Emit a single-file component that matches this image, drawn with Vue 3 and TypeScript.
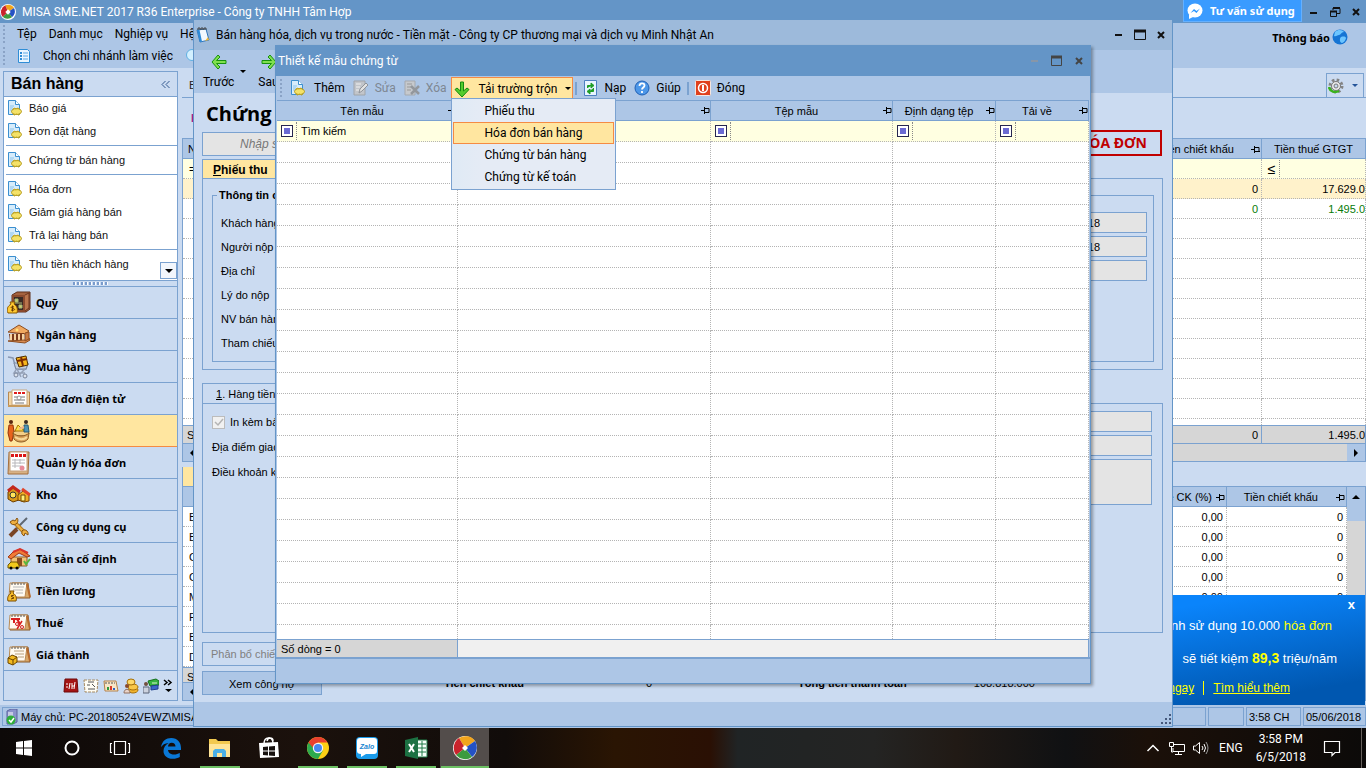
<script setup lang="ts">
import { ref } from 'vue'

interface NavItem { label: string; icon: string }
interface ListItem { label: string; sep?: boolean }

const docIcon = '<path d="M1.500.5h7l4 4v10h-11z" fill="#d6ecfb" stroke="#3b8fd0"/><path d="M8.500.5v4h4" fill="#fff" stroke="#3b8fd0"/><path d="M3 6h4M3 8h3M3 10h3" stroke="#8cc4ec"/><ellipse cx="9.500" cy="11.500" rx="5" ry="3" fill="#f4e268" stroke="#b59a1c"/><path d="M6 9.500l1-1.500 2 1 2-1 1.500 1.200M6 14l1.500 1 2-1 2 1 1.500-1" fill="none" stroke="#c2a51f"/>'

const shortcuts: ListItem[] = [
  { label: 'Báo giá' },
  { label: 'Đơn đặt hàng' },
  { label: 'Chứng từ bán hàng', sep: true },
  { label: 'Hóa đơn', sep: true },
  { label: 'Giảm giá hàng bán' },
  { label: 'Trả lại hàng bán' },
  { label: 'Thu tiền khách hàng', sep: true },
]

const calendar = '<path d="M5 4h16l2 15H3z" fill="#d9a868" stroke="#8a5a2b"/><path d="M3 4h17l-2 14H2z" fill="#fffaf0" stroke="#b88a55"/><path d="M4 5h15" stroke="#555" stroke-dasharray="2 1"/><path d="M20 5l3 13" stroke="#b86a2c" stroke-width="2"/>'

const modules: NavItem[] = [
  { label: 'Quỹ', icon: '<path d="M5 4l5-3h13v17l-4 3H5z" fill="#a4623f" stroke="#5f2f1b"/><path d="M5 4h13v17H5z" fill="#8b4a2e"/><path d="M7 6h9v13H7z" fill="#3a2a24"/><path d="M8 12h7M8 8h3v3H8zM12 14h3v3h-3z" stroke="#a7b77a" fill="#c9d06c"/><path d="M18 4l4-2v15l-4 3" fill="#b9744c" stroke="#6b3520"/><path d="M3 11h5l-1 2c3 2 4 5 3 9H1c-2-4 0-7 3-9z" fill="#ffc931" stroke="#8a5a00"/><path d="M7 16c-3-1-4 1-1 1.500s1.500 2.500-2 1.500M5.500 14.500v6" fill="none" stroke="#6b3d00"/>' },
  { label: 'Ngân hàng', icon: '<path d="M1 9L12 2l10 6-4 3z" fill="#f0a860" stroke="#8d4d20"/><path d="M2 11l15-1v9L3 18z" fill="#7a3b1a"/><path d="M4 11v7M8 11v7M12 11v7M16 11v8" stroke="#f6d3a0" stroke-width="2"/><path d="M1 18l17 2 5-3-1-2-4 2z" fill="#d98b50" stroke="#8d4d20"/><path d="M18 10l4-1v7l-4 2z" fill="#c87a44" stroke="#8d4d20"/><circle cx="10" cy="7" r="1.500" fill="#ffe27a"/>' },
  { label: 'Mua hàng', icon: '<path d="M1 2l5 1 3 11h10l2-6" fill="none" stroke="#8797b3" stroke-width="1.500"/><path d="M7 8h14l-2 6H9z" fill="#c3ccdb" stroke="#7d8aa3"/><path d="M9 3l10-2 2 9-9 2z" fill="#f7b61d" stroke="#503000"/><path d="M14 2l2 9M10 6l10-2" stroke="#7b2a00" stroke-width="2"/><path d="M9 15l-2 3h11M10 14l4 8M18 14l-5 5" fill="none" stroke="#95a1b7" stroke-width="1.500"/><circle cx="9" cy="20" r="2" fill="#dde3ed" stroke="#77839a"/><circle cx="18" cy="21" r="2" fill="#dde3ed" stroke="#77839a"/>' },
  { label: 'Hóa đơn điện tử', icon: '<path d="M1.500 5h21v14h-21z" fill="#f2d5a5" stroke="#b88950"/><path d="M5 3h15v15H5z" fill="#fff" stroke="#c9a77c"/><path d="M7 6h11" stroke="#df1c1c" stroke-width="2" stroke-dasharray="3 1"/><path d="M7 10h4M14 10h4M7 13h11M8 16h9" stroke="#777"/><circle cx="12" cy="11" r="2" fill="none" stroke="#999"/><path d="M1 19h22" stroke="#c79a5c" stroke-width="2"/>' },
  { label: 'Bán hàng', icon: '<circle cx="4" cy="3" r="2" fill="#5a260f"/><path d="M2 6h4l1 7-2 9H3L1 14z" fill="#e8641c" stroke="#94320a"/><ellipse cx="14" cy="14" rx="8" ry="3" fill="#f3cf88" stroke="#8f5d25"/><path d="M6 14c4 4 12 4 16 0l-1 6c-3 4-11 4-14 0z" fill="#d9a35a" stroke="#8f5d25"/><path d="M8 18c4 3 9 3 12 0" fill="none" stroke="#f7d99a" stroke-width="2"/><path d="M8 12l3-6 3 3 4 3z" fill="#ffe04c" stroke="#a87500"/><circle cx="19" cy="3" r="2" fill="#3b2a20"/><path d="M17 6h4l1 7h-5z" fill="#4d94b5" stroke="#285a75"/><path d="M17 8l-5 2" stroke="#f3b98a" stroke-width="2"/>' },
  { label: 'Quản lý hóa đơn', icon: '<path d="M2 1h20l-1 22H1z" fill="#d8b184" stroke="#a56f3c"/><path d="M3 1h17v19H3z" fill="#fff" stroke="#c4a07a"/><path d="M4 4.500h15" stroke="#dc1717" stroke-width="3" stroke-dasharray="3 1"/><path d="M5 9h13M5 12h13M5 15h9M8 8v9M13 8v5" stroke="#b7b7bb"/><circle cx="15" cy="17" r="2.500" fill="#e88a98"/>' },
  { label: 'Kho', icon: '<path d="M1 9l5-4 6 4v8l-6 2-5-3z" fill="#d89818" stroke="#6c3d00"/><path d="M1 8l5-4 7 5" fill="none" stroke="#c3281c" stroke-width="3"/><circle cx="6" cy="12" r="3" fill="#ffe45a" stroke="#333"/><path d="M11 12l5-4 6 4v6l-5 1-6-2z" fill="#f0ae26" stroke="#7c4700"/><path d="M15 6l8 6" stroke="#e0452c" stroke-width="3"/><path d="M14 12h4v6h-4z" fill="#fff07a" stroke="#704600"/>' },
  { label: 'Công cụ dụng cụ', icon: '<path d="M8 15L20 3" stroke="#5f6772" stroke-width="2"/><path d="M3 21l7-7" stroke="#7a4526" stroke-width="4"/><path d="M7 7l10 10" stroke="#b77a1c" stroke-width="4"/><path d="M7 7l10 10" stroke="#efb040" stroke-width="2"/><path d="M3 7a4 4 0 006 2 4 4 0 001-6L8 6 6 5zM16 15a4 4 0 015 5l-3-2-1 3a4 4 0 01-2-5z" fill="#efb040" stroke="#875310"/>' },
  { label: 'Tài sản cố định', icon: '<path d="M4 10h16v9H4z" fill="#f3c376" stroke="#8e5c24"/><path d="M1 10l5-5 7-3 10 7-3 1-8-4-8 6z" fill="#f07b35" stroke="#9e3a14"/><path d="M6 5l7-3 8 4" fill="none" stroke="#d9342a" stroke-width="2"/><path d="M10 11h5v8h-5z" fill="#8a4d1f"/><path d="M1 18l3-3h6l2 3v3H1z" fill="#f2c91c" stroke="#715600"/><circle cx="4" cy="21" r="1.500"/><circle cx="10" cy="21" r="1.500"/><path d="M17 14l2 3 4-5" fill="none" stroke="#55b53f" stroke-width="2"/>' },
  { label: 'Tiền lương', icon: calendar + '<path d="M6 8h11M6 11h10M9 14h7" stroke="#b7b7b7"/><path d="M3 12h4l-1 2c3 2 4 5 3 8H1c-1-3 0-6 3-8z" fill="#f7bd2a" stroke="#7a4c00"/><path d="M7 16l-3 1 3 2-3 1" fill="none" stroke="#6b3d00"/>' },
  { label: 'Thuế', icon: calendar + '<path d="M4 8h9M7 8v4M10 8l3 5" stroke="#d81e1e" stroke-width="2"/><path d="M10 18l5-8" stroke="#d81e1e" stroke-width="1.500"/><circle cx="10" cy="13" r="1.500" fill="none" stroke="#d81e1e"/><circle cx="15" cy="16" r="1.500" fill="none" stroke="#d81e1e"/>' },
  { label: 'Giá thành', icon: calendar + '<path d="M7 8h10M8 11h9M11 14h6" stroke="#b9a07c"/><path d="M1 15l4-3 5 2v5l-4 3-5-2z" fill="#f2b91e" stroke="#6c4500"/><path d="M1 15l5 2 4-3M6 17v5" fill="none" stroke="#6c4500"/>' },
]

const trayModules: NavItem[] = [
  { label: 'Sổ cái', icon: '<path d="M2 1h12l1 13H1z" fill="#a51414" stroke="#6e0909"/><path d="M3 6h2M3 9h2M7 5l-1 6M9 5v6M12 4l-1 7M9 8h2" stroke="#fff"/>' },
  { label: 'Hợp đồng', icon: '<path d="M1 2h14l-1 12H2z" fill="#fffdf4" stroke="#a68b62" stroke-dasharray="3 1"/><path d="M5 4h6M4 7h3M9 6l3 3M5 11h7" stroke="#555"/>' },
  { label: 'Ngân sách', icon: '<path d="M1 3h12l2 10H2z" fill="#f7e5c6" stroke="#b5824a"/><path d="M2 5h10" stroke="#555" stroke-dasharray="2 1"/><path d="M5 12V9" stroke="#2c9b3c" stroke-width="2"/><path d="M8 12V8" stroke="#d83a2a" stroke-width="2"/><path d="M11 12v-2" stroke="#2c62c8" stroke-width="2"/>' },
  { label: 'Cổ đông', icon: '<ellipse cx="10" cy="12" rx="5" ry="3" fill="#f2b42c" stroke="#a56f08"/><ellipse cx="10" cy="9" rx="5" ry="3" fill="#f9c747" stroke="#a56f08"/><ellipse cx="8" cy="4" rx="4" ry="3" fill="#ffd968" stroke="#a56f08"/><circle cx="4" cy="8" r="2" fill="#8b4b2c"/><path d="M1 15c0-5 6-5 6 0z" fill="#e9d3c8" stroke="#92705f"/>' },
  { label: 'Thủ quỹ', icon: '<path d="M5 3l8-2 3 2v4l-9 1z" fill="#36b340" stroke="#14701c"/><path d="M8 8l7-1v4l-7 1z" fill="#3d66c9" stroke="#20408c"/><path d="M9 5h5" stroke="#d7f5d0"/><circle cx="3" cy="6" r="2" fill="#72513f"/><path d="M0 15V9h6v6z" fill="#ccd2de" stroke="#5a6578"/>' },
]

const tasks = [
  { name: 'Cortana', cls: 'plain', icon: '<circle cx="12" cy="12" r="6.500" fill="none" stroke="#fff" stroke-width="2"/>' },
  { name: 'Task view', cls: 'plain', icon: '<path d="M6.500 5.500h11v13h-11zM4 7.500H2.500v9H4M20 7.500h1.500v9H20" fill="none" stroke="#fff" stroke-width="1.200"/>' },
  { name: 'Edge', cls: '', icon: '<path d="M2 11.300C3 5 7 2 12.300 2 18.500 2 22 6.500 22 12v2H9c.3 3 3 4.500 6 4.500 2.300 0 4.200-.6 5.800-1.500v4c-2 1.200-4.300 1.800-7 1.800C8 22.800 4.500 19.500 4.500 15c0-3.600 2-6.500 5.200-8C5.800 7.200 3.300 9 2 11.300zM9 10.500h7.500C16.500 8 15 6.700 12.700 6.700 10.600 6.700 9.200 8.300 9 10.500z" fill="#0a78d6"/>' },
  { name: 'File Explorer', cls: 'on', icon: '<path d="M1 3h7l2 2h12v16H1z" fill="#f2c94f"/><path d="M1 8h21v13H1z" fill="#ffe597"/><path d="M5 21v-6l2-2h9l2 2v6h-4v-4H9v4z" fill="#4bb0e6"/>' },
  { name: 'Store', cls: '', icon: '<path d="M2 7l19-1 1 15-19 1z" fill="#fff"/><path d="M7 8c0-8 9-8 9-1M10 5c1-4 6-4 6 0" fill="none" stroke="#fff" stroke-width="1.500"/><path d="M6 11l5-.5v4H6zM12 10.500l6-.5v4.500h-6zM6 15.500h5v4L6 19zM12 15.500h6v4.500l-6-.5z" fill="#17110e"/>' },
  { name: 'Chrome', cls: 'on', icon: '<circle cx="12" cy="12" r="11" fill="#fcd015"/><path d="M2.500 6.500A11 11 0 0012 23l4.800-8.300L12 12z" fill="#2da94f"/><path d="M2.500 6.500A11 11 0 0121.500 6.500H12L8 13z" fill="#e8402f"/><circle cx="12" cy="12" r="5.200" fill="#f5f5f5"/><circle cx="12" cy="12" r="4" fill="#4688f1"/>' },
  { name: 'Zalo', cls: 'on', icon: '<rect x="1" y="1" width="22" height="22" rx="4" fill="#1a9bea"/><path d="M5 2h14q3 0 3 3v10q0 3-3 3h-8l-5 3v-3q-4 0-4-3V5q0-3 3-3z" fill="#fff"/><text x="12" y="13" text-anchor="middle" font-family="Liberation Sans, sans-serif" font-size="7" font-weight="bold" font-style="italic" fill="#1684d0">Zalo</text>' },
  { name: 'Excel', cls: 'on', icon: '<path d="M12 4h11v17H12z" fill="#f7fff9" stroke="#1f7a47"/><path d="M13 8h9M13 12h9M13 16h9M18 5v15" stroke="#1f7a47"/><path d="M1 4l13-3v22L1 20z" fill="#1c7143"/><path d="M5 8l5 8M10 8l-5 8" stroke="#fff" stroke-width="2"/>' },
  { name: 'MISA', cls: 'on active', icon: '<circle cx="12" cy="12" r="12" fill="#fff"/><path d="M12 12L6 2A12 12 0 0122 5z" fill="#f2a51c"/><path d="M12 12L22 5a12 12 0 01-3 16z" fill="#2552c4"/><path d="M12 12l7 9A12 12 0 013 19z" fill="#3c9b3e"/><path d="M12 12l-9 7A12 12 0 016 2z" fill="#c8232c"/><path d="M12 9l3 3-3 3-3-3z" fill="#fff"/>' },
]

const formLabels = ['Khách hàng', 'Người nộp', 'Địa chỉ', 'Lý do nộp', 'NV bán hàng', 'Tham chiếu']
const dates = ['05/06/2018', '05/06/2018', '']
const menuItems = ['Phiếu thu', 'Hóa đơn bán hàng', 'Chứng từ bán hàng', 'Chứng từ kế toán']
const activeMenu = ref(1)
const selected = ref('Bán hàng')
const detailRows = ['B', 'B', 'C', 'C', 'M', 'P', 'B', 'D']
const templateCols = ['Tên mẫu', '', 'Tệp mẫu', 'Định dạng tệp', 'Tải về']
const withList = ref(true)
</script>

<template>
  <div class="desktop">
    <div class="app">
      <header class="titlebar">
        <svg class="logo" viewBox="0 0 24 24"><circle cx="12" cy="12" r="12" fill="#fff" /><path d="M12 12L8 2a11 11 0 0113 4z" fill="#f2a51c" /><path d="M12 12l9-6a11 11 0 01-3 14z" fill="#2552c4" /><path d="M12 12l6 8a11 11 0 01-14-1z" fill="#3c9b3e" /><path d="M12 12l-8 7A11 11 0 018 2z" fill="#c8232c" /><path d="M12 8l4 4-4 4-4-4z" fill="#fff" /></svg>
        <span class="grow">MISA SME.NET 2017 R36 Enterprise - Công ty TNHH Tâm Hợp</span>
        <button class="advise">
          <svg width="16" height="16" viewBox="0 0 16 16"><ellipse cx="8" cy="7.500" rx="7.500" ry="7" fill="#fff" /><path d="M2 11v5l4-2z" fill="#fff" /><path d="M3.500 10L7 6l2.500 2L13 5.500 9.500 10 7 8z" fill="#2c96ff" /></svg>
          Tư vấn sử dụng
        </button>
        <span class="winbtns">
          <button aria-label="Thu nhỏ"><svg width="12" height="12"><path d="M2 7h7" stroke="#111" stroke-width="2" /></svg></button>
          <button aria-label="Khôi phục"><svg width="12" height="12"><path d="M4 2.500h7v5H8M4 2v2" fill="none" stroke="#111" /><path d="M1.500 5.500h6v5h-6z" fill="none" stroke="#111" /><path d="M4 2h7M1 5.500h7" stroke="#111" stroke-width="2" /></svg></button>
          <button aria-label="Đóng"><svg width="12" height="12"><path d="M3 3l6 6M9 3l-6 6" stroke="#111" stroke-width="2" /></svg></button>
        </span>
      </header>

      <div class="menus">
        <div class="menus-left">
          <nav class="menu-row">
            <i class="grip"></i>
            <button>Tệp</button><button>Danh mục</button><button>Nghiệp vụ</button><button>Hệ thống</button>
          </nav>
          <div class="menu-row">
            <i class="grip"></i>
            <button class="branch">
              <svg width="14" height="16" viewBox="0 0 14 16"><path d="M1.500 1.500h9l2 2v11h-11z" fill="#eaf6ff" stroke="#2f8dd6" /><path d="M4 4v9" stroke="#2f8dd6" stroke-width="2" stroke-dasharray="2 1" /><path d="M6 5h5M6 8h5M6 11h5" stroke="#5aa9e6" /></svg>
              Chọn chi nhánh làm việc
            </button>
            <svg width="16" height="16" viewBox="0 0 16 16"><path d="M10 10l5 5" stroke="#9a6b3a" stroke-width="2" /><circle cx="7" cy="7" r="5.500" fill="#d3f0ff" stroke="#5fb0e3" /></svg>
          </div>
        </div>
        <a href="#" class="notice">Thông báo
          <svg width="16" height="16" viewBox="0 0 16 16"><circle cx="8" cy="8" r="7.500" fill="#1574d4" /><path d="M3 3c3-3 8-2 9 0-3 0-3 3-5 3S4 8 2 7zM9 8c3-1 5 0 5 1s-2 5-4 5-3-4-1-6z" fill="#6cc5ff" /></svg>
        </a>
      </div>

      <div class="workspace">
        <aside class="sidebar">
          <h2>Bán hàng <button aria-label="Thu gọn"><svg width="10" height="9"><path d="M4.500 1L1 4.500 4.500 8M8.500 1L5 4.500 8.500 8" fill="none" stroke="#33598f" /></svg></button></h2>
          <div class="shortcuts">
            <ul>
              <li v-for="s in shortcuts" :key="s.label" :class="{ sep: s.sep }">
                <a href="#"><svg width="16" height="16" viewBox="0 0 16 16" v-html="docIcon"></svg>{{ s.label }}</a>
              </li>
            </ul>
            <button class="more" aria-label="Xem thêm"><i class="tri"></i></button>
          </div>
          <div class="splitter"><i></i></div>
          <nav class="modules">
            <button v-for="m in modules" :key="m.label" :class="{ current: m.label === selected }" @click="selected = m.label">
              <svg width="24" height="24" viewBox="0 0 24 24" v-html="m.icon"></svg>{{ m.label }}
            </button>
          </nav>
          <div class="side-tray">
            <button v-for="m in trayModules" :key="m.label" :aria-label="m.label"><svg width="16" height="16" viewBox="0 0 16 16" v-html="m.icon"></svg></button>
            <button aria-label="Cấu hình"><svg width="10" height="14"><path d="M1 1l3 2.500-3 2.500M5 1l3 2.500-3 2.500" fill="none" stroke="#000" stroke-width="1.500" /><path d="M2 10h7l-3.500 3z" /></svg></button>
          </div>
        </aside>

        <main class="content">
          <div class="content-top"><span>B</span>
            <button class="gear" aria-label="Tùy chọn"><svg width="16" height="16" viewBox="0 0 16 16"><circle cx="8" cy="8" r="6" fill="none" stroke="#848484" stroke-width="3" stroke-dasharray="2.500 2.200" /><circle cx="8" cy="8" r="4.500" fill="#e9e9e9" stroke="#777" /><circle cx="8" cy="8" r="2" fill="#cbdbf1" stroke="#777" /><path d="M1 9c1 5 6 6 10 4" fill="none" stroke="#3ab21c" stroke-width="2.500" /></svg><i class="tri blue"></i></button>
          </div>
          <div class="content-title">K</div>
          <table class="grid vouchers">
            <colgroup><col class="c-a"><col><col class="c-b"><col class="c-c"></colgroup>
            <thead><tr><th class="l">N</th><th></th><th class="r">Tiền chiết khấu <svg class="pin" width="9" height="9"><path d="M0 4.500h3M3.500 1v7M4 2.500h4v4H4" fill="none" stroke="#000" /><path d="M4 6.500h5" stroke="#000" /></svg></th><th>Tiền thuế GTGT</th></tr></thead>
            <tbody>
              <tr class="filter"><td>=</td><td></td><td></td><td><button class="op">≤</button></td></tr>
              <tr class="sel"><td></td><td></td><td class="num">0</td><td class="num cut">17.629.0</td></tr>
              <tr class="green"><td></td><td></td><td class="num">0</td><td class="num cut">1.495.0</td></tr>
              <tr v-for="n in 10" :key="n"><td></td><td></td><td></td><td></td></tr>
              <tr class="rest"><td></td><td></td><td></td><td></td></tr>
            </tbody>
            <tfoot><tr><td>S</td><td></td><td class="num">0</td><td class="num cut">1.495.0</td></tr></tfoot>
          </table>
          <div class="hscroll"><button aria-label="Trái"><i class="arrow left"></i></button><button aria-label="Phải"><i class="arrow right"></i></button></div>
          <div class="detail-tab"><button>Chi tiết</button></div>
          <div class="detail">
            <table class="grid">
              <colgroup><col class="c-a"><col><col class="c-d"><col class="c-e"></colgroup>
              <thead><tr><th></th><th></th><th class="r">Tỷ lệ CK (%)<svg class="pin" width="9" height="9"><path d="M0 4.500h3M3.500 1v7M4 2.500h4v4H4" fill="none" stroke="#000" /></svg></th><th class="r">Tiền chiết khấu<svg class="pin far" width="9" height="9"><path d="M0 4.500h3M3.500 1v7M4 2.500h4v4H4" fill="none" stroke="#000" /></svg></th></tr></thead>
              <tbody><tr v-for="(r, i) in detailRows" :key="i"><td>{{ r }}</td><td></td><td class="num">0,00</td><td class="num">0</td></tr></tbody>
              <tfoot><tr><td>S</td><td></td><td></td><td></td></tr></tfoot>
            </table>
            <div class="vscroll"><button aria-label="Lên"><i class="tri up"></i></button></div>
          </div>
          <div class="hscroll"><button aria-label="Trái"><i class="arrow left"></i></button></div>
        </main>
      </div>

      <footer class="status">
        <span class="grow"><svg width="14" height="16" viewBox="0 0 14 16"><path d="M2 2l4-2h6v13l-4 2H2z" fill="#8b93cc" stroke="#5b639c" /><path d="M3 4h5M3 6h5" stroke="#fff" /><circle cx="6" cy="11" r="4.500" fill="#2faf3a" /><path d="M4 11l2 2 3-4" fill="none" stroke="#fff" stroke-width="1.500" /></svg>Máy chủ: PC-20180524VEWZ\MISA</span>
        <span class="s1"></span><span class="s1"></span><span class="s2">3:58 CH</span><span class="s3">05/06/2018</span>
      </footer>

      <section class="promo">
        <button aria-label="Đóng thông báo">x</button>
        <p>nh sử dụng 10.000 <em>hóa đơn</em></p>
        <p class="p2">sẽ tiết kiệm <strong>89,3</strong> triệu/năm</p>
        <p class="p3"><a href="#">ngay</a><i></i><a href="#">Tìm hiểu thêm</a></p>
      </section>

      <section class="voucher">
        <header class="vtitle">
          <svg width="14" height="16" viewBox="0 0 14 16"><path d="M1 3l9-1 3 11-9 2z" fill="#f3f9ff" stroke="#2f74b8" /><path d="M1 3l3 12 2-.5L3.500 3z" fill="#2d8ad8" /><path d="M2 3V1h2v2M5 3V1h2v2M8 3V1h2v2" fill="none" stroke="#444" /><path d="M9 14l4-1-1-3z" fill="#f0b93c" /></svg>
          <span class="grow">Bán hàng hóa, dịch vụ trong nước - Tiền mặt - Công ty CP thương mại và dịch vụ Minh Nhật An</span>
          <span class="winbtns">
            <button aria-label="Thu nhỏ"><svg width="12" height="12"><path d="M2 6h7" stroke="#111" stroke-width="2" /></svg></button>
            <button aria-label="Phóng to"><svg width="12" height="12"><path d="M.5 1.500h11v9H.5z" fill="none" stroke="#111" /><path d="M0 2h12" stroke="#111" stroke-width="3" /></svg></button>
            <button aria-label="Đóng"><svg width="12" height="12"><path d="M3 3l6 6M9 3l-6 6" stroke="#111" stroke-width="2" /></svg></button>
          </span>
        </header>
        <div class="vtools">
          <button><svg width="18" height="18" viewBox="0 0 18 18"><path d="M8 2L2 9l6 7 2-2-3.500-3.500H16v-3H6.500L10 4z" fill="#7fe04e" stroke="#17920e" /></svg>Trước</button>
          <i class="tri"></i>
          <button><svg width="18" height="18" viewBox="0 0 18 18"><path d="M10 2l6 7-6 7-2-2 3.500-3.500H2v-3h9.500L8 4z" fill="#7fe04e" stroke="#17920e" /></svg>Sau</button>
        </div>
        <div class="vbody">
          <h1>Chứng từ</h1>
          <div class="vsearch"><input type="text" placeholder="Nhập số" aria-label="Nhập số"><strong>HÓA ĐƠN</strong></div>
          <div class="vtab"><button><u>P</u>hiếu thu</button></div>
          <div class="vpanel">
            <fieldset>
              <legend>Thông tin chung</legend>
              <div class="labels"><span v-for="l in formLabels" :key="l">{{ l }}</span></div>
              <div class="inputs"><input v-for="(d, i) in dates" :key="i" type="text" :value="d" :aria-label="formLabels[i]"></div>
            </fieldset>
          </div>
          <div class="vtab2"><button><u>1</u>. Hàng tiền</button></div>
          <div class="vpanel2">
            <div class="opts">
              <label><input v-model="withList" type="checkbox" disabled><svg width="13" height="13"><path d="M3 6l3 3 5-6" fill="none" stroke="#b4b4b4" stroke-width="1.500" /></svg>In kèm bảng kê</label>
              <label for="place">Địa điểm giao hàng</label>
              <label for="terms">Điều khoản khác</label>
            </div>
            <div class="wide"><input type="text" aria-label="Bảng kê"><input id="place" type="text"><textarea id="terms"></textarea></div>
          </div>
          <button class="vbtn off" disabled>Phân bổ chiết khấu</button>
          <div class="totals"><button class="vbtn">Xem công nợ</button><b class="t1">Tiền chiết khấu</b><span class="t2">0</span><b class="t3">Tổng tiền thanh toán</b><span>108.818.000</span></div>
        </div>
        <footer class="vfoot"><svg width="12" height="12"><path d="M9 1h2M9 5h2M5 5h2M9 9h2M5 9h2M1 9h2" stroke="#46597c" stroke-width="2" /></svg></footer>
      </section>

      <section class="dialog" role="dialog" aria-label="Thiết kế mẫu chứng từ">
        <header class="dtitle">
          <span class="grow">Thiết kế mẫu chứng từ</span>
          <span class="winbtns">
            <button aria-label="Thu nhỏ"><svg width="12" height="12"><path d="M2 6h7" stroke="#8796a8" stroke-width="2" /></svg></button>
            <button aria-label="Phóng to"><svg width="12" height="12"><path d="M.5 1.500h10v9H.5z" fill="none" stroke="#444" /><path d="M0 2h11" stroke="#444" stroke-width="3" /></svg></button>
            <button aria-label="Đóng"><svg width="12" height="12"><path d="M3 3l6 6M9 3l-6 6" stroke="#444" stroke-width="2" /></svg></button>
          </span>
        </header>
        <div class="dtools">
          <i class="grip"></i>
          <button class="first"><svg width="16" height="16" viewBox="0 0 16 16" v-html="docIcon"></svg>Thêm</button>
          <button disabled><svg width="16" height="16" viewBox="0 0 16 16"><path d="M1 1h11v14H1z" fill="#c2c5ca" stroke="#a0a4a9" /><path d="M3 4h5M3 7h4M3 10h3" stroke="#f0f0f0" /><path d="M6 13l1-4 6-6 2 2-6 6z" fill="#e2e2e2" stroke="#8f9399" /></svg>Sửa</button>
          <button disabled><svg width="16" height="16" viewBox="0 0 16 16"><path d="M1 1h10v14H1z" fill="#c6c9cd" stroke="#a5a9ae" /><path d="M3 4h5M3 7h4M3 10h4" stroke="#999" /><path d="M7 6l8 8M15 6l-8 8" stroke="#93979c" stroke-width="2.500" /></svg>Xóa</button>
          <div class="drop">
            <button class="open" aria-haspopup="menu" aria-expanded="true"><svg width="18" height="18" viewBox="0 0 18 18"><path d="M9 17L2 9.500l2-1.500 3.500 3V2h3v9L14 8l2 1.500z" fill="#55cc2c" stroke="#168a10" /></svg>Tải trường trộn<i class="tri"></i></button>
            <div class="menu" role="menu">
              <button v-for="(m, i) in menuItems" :key="m" role="menuitem" :class="{ hot: i === activeMenu }" @mouseenter="activeMenu = i">{{ m }}</button>
            </div>
          </div>
          <i class="bar"></i>
          <button><svg width="16" height="16" viewBox="0 0 16 16"><path d="M1.500.5h12v15h-12z" fill="#e8f3ff" stroke="#4d7fc0" /><path d="M4.500 8V5.500H9M8 3l3 2.500L8 8zM10.500 8v3.500H6M7 9l-3 2.500L7 14z" fill="#1f9d25" stroke="#1f9d25" /></svg>Nạp</button>
          <button><svg width="16" height="16" viewBox="0 0 16 16"><circle cx="8" cy="8" r="7" fill="#4d97e8" stroke="#1f5fb4" /><path d="M5.500 6c0-3.500 5-3.500 5-.5 0 2-2.500 2-2.500 4M8 11v2" fill="none" stroke="#fff" stroke-width="1.800" /></svg>Giúp</button>
          <i class="bar"></i>
          <button><svg width="16" height="16" viewBox="0 0 16 16"><rect x=".5" y=".5" width="15" height="15" rx="1" fill="#e0401c" stroke="#f4e6e0" /><circle cx="8" cy="8" r="4.500" fill="none" stroke="#fff" stroke-width="1.500" /><path d="M8 5v6" stroke="#fff" stroke-width="2" /></svg>Đóng</button>
        </div>
        <div class="dgrid">
          <table class="grid">
            <colgroup><col class="k1"><col><col class="k3"><col class="k4"><col class="k5"></colgroup>
            <thead><tr><th v-for="c in templateCols" :key="c"><div>{{ c }}<svg class="pin" width="9" height="9"><path d="M0 4.500h3M3.500 1v7M4 2.500h4v4H4" fill="none" stroke="#000" /></svg></div></th></tr></thead>
            <tbody>
              <tr class="filter"><td v-for="(c, i) in templateCols" :key="c"><div><button class="cond" :aria-label="'Lọc ' + c"></button><span>{{ i === 0 ? 'Tìm kiếm' : '' }}</span></div></td></tr>
              <tr v-for="n in 23" :key="n"><td v-for="c in 5" :key="c"></td></tr>
              <tr class="rest"><td v-for="c in 5" :key="c"></td></tr>
            </tbody>
            <tfoot><tr><td>Số dòng = 0</td><td colspan="4"></td></tr></tfoot>
          </table>
        </div>
      </section>
    </div>

    <footer class="taskbar">
      <button class="task start" aria-label="Start"><svg width="24" height="24" viewBox="0 0 24 24"><path d="M4 6l7-1v6.500H4zM12 5l8-1v7.500h-8zM4 12.500h7V19l-7-1zM12 12.500h8V20l-8-1z" fill="#fff" /></svg></button>
      <button v-for="t in tasks" :key="t.name" class="task" :class="t.cls" :aria-label="t.name"><svg width="24" height="24" viewBox="0 0 24 24" v-html="t.icon"></svg></button>
      <span class="grow"></span>
      <svg width="14" height="16"><path d="M1.500 11L7 5.500l5.500 5.500" fill="none" stroke="#fff" stroke-width="1.500" /></svg>
      <svg width="18" height="16"><path d="M6 4.500h10.500v7H5V8M10.500 12v2M7 14.500h7" fill="none" stroke="#fff" /><path d="M1.500 2.500h4v4h-4zM3.500 7v5H5" fill="none" stroke="#fff" /></svg>
      <svg width="17" height="16"><path d="M1.500 6h2L7.500 2.500v11L3.500 10h-2z" fill="none" stroke="#fff" /><path d="M10 6q2 2 0 4M12 4q3 4 0 8" fill="none" stroke="#fff" /><path d="M14 2q4 6 0 12" fill="none" stroke="#999" /></svg>
      <span>ENG</span>
      <time>3:58 PM<br>6/5/2018</time>
      <svg width="18" height="18"><path d="M1.500 2.500h15v11H12l-3 3v-3H1.500z" fill="none" stroke="#fff" stroke-width="1.200" /></svg>
      <i class="peek"></i>
    </footer>
  </div>
</template>

<style>
body { margin: 0; }
</style>

<style scoped>
.desktop { --line: #7ba2d0; --blue: #adc6e6; --pale: #cbdbf1; --ui: Roboto, "Noto Sans", sans-serif; height: 100vh; display: flex; flex-direction: column; overflow: hidden; font: 11px "Liberation Sans", Arial, sans-serif; color: #000; }
* { box-sizing: border-box; }
button { font: inherit; color: inherit; border: 0; background: none; padding: 0; margin: 0; white-space: nowrap; }
input, textarea { font: inherit; margin: 0; border: 1px solid var(--line); background: #e4e4e4; border-radius: 0; resize: none; }
svg { flex: none; display: block; }
.grow { flex: 1; min-width: 0; }
.app { position: relative; flex: 1; min-height: 0; display: flex; flex-direction: column; background: var(--pale); }
.titlebar { height: 23px; flex: none; display: flex; align-items: center; background: #6495c7; color: #fff; font: 12px var(--ui); }
.logo { width: 16px; height: 16px; margin-right: 6px; }
.advise { align-self: flex-start; display: flex; align-items: center; gap: 7px; height: 22px; width: 119px; padding-left: 3px; background: #3a9bff; border: 1px solid #64b0ff; border-top: 0; font: bold 11px "Noto Sans", sans-serif; }
.winbtns { display: flex; gap: 10px; padding: 0 5px 0 6px; }
.titlebar .winbtns { gap: 9px; padding-right: 4px; }
.winbtns button { width: 12px; height: 12px; }
.menus { height: 45px; flex: none; display: flex; justify-content: space-between; background: var(--blue); font: 12px var(--ui); }
.menu-row { height: 22px; display: flex; align-items: center; padding-left: 3px; gap: 12px; }
.menu-row > .grip + button { margin-left: -2px; }
.grip { width: 4px; height: 18px; background: radial-gradient(circle at 1px 1px, #8aa3c6 1px, transparent 1px) 0 0 / 4px 4px; }
.branch { display: flex; align-items: center; gap: 12px; }
.notice { display: flex; align-items: center; gap: 2px; height: 28px; padding-right: 18px; color: #000; text-decoration: none; font: bold 11px "Noto Sans", sans-serif; }
.workspace { flex: 1; min-height: 0; display: flex; gap: 4px; padding: 3px 0 4px 3px; }
.sidebar { width: 175px; flex: none; display: flex; flex-direction: column; border: 1px solid var(--line); }
.sidebar h2 { flex: none; height: 25px; margin: 0; padding: 0 6px 0 7px; display: flex; align-items: center; justify-content: space-between; font-size: 16px; font-weight: bold; border-bottom: 1px solid var(--line); }
.shortcuts { position: relative; flex: 1; min-height: 0; padding-left: 2px; background: #fff; border-bottom: 1px solid var(--line); }
.shortcuts ul { margin: 0; padding: 0; list-style: none; }
.shortcuts a { display: flex; align-items: center; gap: 6px; height: 23px; padding: 0 0 2px 1px; color: #111; text-decoration: none; }
.shortcuts .sep { border-top: 1px solid var(--line); margin-top: 2px; padding-top: 3px; }
.more { position: absolute; right: 0; bottom: 1px; width: 17px; height: 17px; display: grid; place-items: center; border: 1px solid var(--line); background: #f2f6fc; }
.tri { display: block; border: 4px solid transparent; border-top-color: #000; border-bottom: 0; }
.tri.up { border: 4px solid transparent; border-bottom-color: #000; border-top: 0; }
.tri.blue { border-width: 3px; border-bottom: 0; border-top-color: #24549a; }
.splitter { height: 5px; flex: none; display: grid; place-items: center; }
.splitter i { width: 36px; height: 3px; background: repeating-linear-gradient(90deg, #7b9ccd 0 2px, #fff 2px 3px, transparent 3px 4px); }
.modules button { display: flex; align-items: center; gap: 5px; width: 100%; height: 32px; padding-left: 3px; border-top: 1px solid var(--line); font: bold 11px "Noto Sans", sans-serif; }
.modules .current { background: #ffe6a0; }
.modules .current + button { border-top-color: #f58b43; }
.side-tray { height: 30px; flex: none; display: flex; align-items: center; justify-content: flex-end; gap: 4px; padding-right: 4px; border-top: 1px solid var(--line); }
.content { flex: 1; min-width: 0; display: flex; flex-direction: column; }
.content-top { height: 27px; flex: none; display: flex; justify-content: space-between; align-items: flex-end; padding: 0 2px 0 7px; border-bottom: 1px solid var(--line); }
.content-top span { line-height: 24px; color: #222; }
.gear { width: 38px; height: 24px; border: 1px solid var(--line); border-bottom: 0; display: flex; align-items: center; gap: 8px; padding-left: 1px; }
.content-title { height: 40px; flex: none; line-height: 40px; padding-left: 9px; color: #a3208a; font-weight: bold; }
.grid { width: 100%; table-layout: fixed; border-collapse: separate; border-spacing: 0; background: #fff; }
.grid th, .grid td { padding: 0 3px; height: 20px; white-space: nowrap; overflow: hidden; font-weight: normal; line-height: 16px; }
.grid td { border-bottom: 1px dotted #b4b4b4; border-right: 1px dotted #b4b4b4; padding-left: 6px; }
.grid th { height: 21px; background: var(--blue); border-top: 1px solid var(--line); border-bottom: 1px solid var(--line); border-right: 1px solid var(--line); text-align: center; }
.grid .l { text-align: left; padding-left: 5px; }
.grid th.r { text-align: right; }
.grid th.r .pin { display: inline-block; vertical-align: -1px; margin-left: 4px; }
.grid th.r .pin.far { margin-left: 18px; }
.pin { flex: none; }
.grid.vouchers th.r .pin { margin-left: 14px; }
.vouchers th.r { padding-right: 1px; }
.detail th.r { padding-right: 1px; }
.grid .filter td { background: #ffffe1; }
.grid .sel td { background: #fff2cb; }
.grid .green td { color: #087b08; }
.grid .num { text-align: right; }
.grid .cut { padding-right: 0; }
.grid .rest td { height: 6px; border-bottom: 0; }
.grid tfoot td { height: 18px; background: #d6d6d6; border-top: 1px solid var(--line); border-right: 1px solid var(--line); border-bottom: 0; padding-left: 4px; }
.op { display: block; width: 16px; height: 17px; margin-left: -4px; border-right: 1px dotted #888; font-size: 14px; line-height: 16px; }
.vouchers, .vouchers + .hscroll { border-left: 1px solid var(--line); flex: none; }
.c-a { width: 30px; } .c-b { width: 130px; } .c-c { width: 104px; } .c-d { width: 130px; } .c-e { width: 120px; }
.hscroll { height: 19px; flex: none; display: flex; justify-content: space-between; background: #d6d6d6; border: 1px solid var(--line); }
.hscroll button { width: 18px; background: var(--blue); display: grid; place-items: center; }
.arrow { border: 4px solid transparent; }
.arrow.left { border-right-color: #000; border-left: 0; }
.arrow.right { border-left-color: #000; border-right: 0; }
.detail-tab { height: 19px; margin-top: 5px; flex: none; display: flex; border-left: 1px solid var(--line); }
.detail-tab button { background: #ffe6a0; color: #e66b18; padding: 0 10px; font-weight: bold; }
.detail { flex: 1; min-height: 0; display: flex; overflow: hidden; border-left: 1px solid var(--line); }
.vscroll { width: 19px; flex: none; background: #d6d6d6; border: 1px solid var(--line); border-left: 0; }
.vscroll button { width: 100%; height: 34px; padding-bottom: 14px; background: var(--blue); display: grid; place-items: center; }
.status { height: 23px; flex: none; display: flex; gap: 2px; padding: 2px 0 2px 2px; background: var(--blue); }
.status span { display: flex; align-items: center; gap: 2px; padding-left: 2px; border: 1px solid var(--line); }
.status .s1 { width: 36px; } .status .s2 { width: 55px; } .status .s3 { width: 63px; }
.promo { position: absolute; right: 1px; bottom: 23px; width: 300px; height: 110px; background: linear-gradient(170deg, #0a84fb 20%, #0057b0 85%); color: #fff; font-size: 13px; }
.promo button { position: absolute; right: 10px; top: 2px; font-weight: bold; }
.promo p { margin: 0; line-height: 32px; height: 32px; text-align: right; padding-right: 33px; }
.promo p:first-of-type { margin-top: 15px; }
.promo .p2 { padding-right: 28px; }
.promo em { color: #ff0; font-style: normal; }
.promo strong { color: #ff0; font-size: 14px; }
.promo .p3 { display: flex; justify-content: flex-end; align-items: center; gap: 9px; padding-right: 75px; line-height: 28px; height: 28px; font-size: 12px; }
.promo .p3 i { width: 1px; height: 14px; background: #ff0; }
.promo a { color: #ff0; }
.voucher { position: absolute; inset: 20px 193px 1px; display: flex; flex-direction: column; background: var(--pale); border: 1px solid #6495c7; border-top: 0; }
.vtitle { height: 30px; flex: none; display: flex; align-items: center; gap: 6px; padding-left: 2px; background: #9dbadb; font: 12px var(--ui); }
.vtitle .winbtns { gap: 9px; }
.vtools { height: 43px; flex: none; display: flex; align-items: center; background: var(--blue); font: 12px var(--ui); padding-left: 9px; }
.vtools button { display: flex; flex-direction: column; align-items: center; gap: 2px; line-height: 18px; }
.vtools .tri { margin: 0 12px 0 6px; border-width: 3px; border-bottom: 0; }
.vbody { flex: 1; min-height: 0; padding: 0 9px 0 8px; display: flex; flex-direction: column; }
.vbody h1 { margin: 0; height: 37px; flex: none; padding: 4px 0 0 4px; font: bold 20px/34px "Open Sans", "Noto Sans", sans-serif; }
.vsearch { display: flex; justify-content: space-between; height: 26px; flex: none; }
.vsearch input { width: 200px; height: 24px; margin-top: 2px; padding-left: 37px; font: italic 12px "Liberation Sans", sans-serif; }
.vsearch input::placeholder { color: #777; opacity: 1; }
.vsearch strong { border: 2px solid #c00000; color: #c00000; padding: 0 13px; font: bold 14px/21px "Open Sans", "Noto Sans", sans-serif; width: 180px; text-align: right; margin-right: 1px; }
.vtab { margin-top: 3px; flex: none; height: 19px; }
.vtab button { width: 110px; height: 20px; text-align: left; padding-left: 10px; background: #ffe6a0; border: 1px solid var(--line); border-bottom: 0; font-weight: bold; font-size: 12px; }
.vpanel { height: 192px; flex: none; border: 1px solid var(--line); padding: 10px 8px 7px 9px; }
.vpanel fieldset { height: 100%; margin: 0; border: 1px solid var(--line); padding: 6px 6px 0 8px; display: flex; justify-content: space-between; }
.vpanel legend { font-weight: bold; padding: 0 2px; margin-left: -4px; }
.labels { display: flex; flex-direction: column; margin-top: 4px; line-height: 24px; }
.inputs { display: flex; flex-direction: column; gap: 3px; width: 108px; margin-top: 5px; }
.inputs input { width: 100%; height: 21px; padding: 0 5px; }
.vtab2 { flex: none; margin-top: 13px; height: 20px; }
.vtab2 button { width: 110px; height: 20px; border: 1px solid var(--line); border-bottom: 0; text-align: left; padding-left: 13px; }
.vpanel2 { height: 230px; flex: none; border: 1px solid var(--line); padding: 7px 10px 0 9px; display: flex; justify-content: space-between; }
.opts { display: flex; flex-direction: column; line-height: 25px; margin-top: -1px; }
.opts label { display: flex; align-items: center; gap: 5px; position: relative; }
.opts input { appearance: none; width: 13px; height: 13px; background: #f1f1f1; border: 1px solid #bcbcbc; }
.opts label svg { position: absolute; left: 0; }
.wide { width: 300px; display: flex; flex-direction: column; gap: 3px; }
.wide input { height: 21px; } .wide textarea { height: 46px; }
.vbtn { flex: none; height: 24px; width: 120px; border: 1px solid var(--line); background: var(--blue); }
.vbtn.off { margin-top: 9px; padding-left: 8px; text-align: left; background: var(--pale); color: #808080; }
.totals { display: flex; margin-top: 5px; line-height: 24px; }
.totals .t1 { margin-left: 122px; } .totals .t2 { margin-left: 122px; } .totals .t3 { margin: 0 67px 0 146px; }
.vfoot { height: 24px; flex: none; background: var(--blue); display: flex; align-items: flex-end; justify-content: flex-end; }
.dialog { position: absolute; inset: 45px 275px 44px; display: flex; flex-direction: column; border: 1px solid #6495c7; background: var(--blue); box-shadow: 2px 2px 3px #0005; padding-bottom: 24px; }
.dtitle { height: 30px; flex: none; display: flex; align-items: center; padding-left: 2px; background: #6495c7; color: #fff; font: 12px var(--ui); }
.dtools { height: 24px; flex: none; display: flex; align-items: center; padding-left: 4px; font: 12px var(--ui); }
.dtools > button { display: flex; align-items: center; gap: 6px; padding: 0 4px; height: 22px; }
.dtools > button.first { gap: 8px; padding-left: 6px; }
.dtools button:disabled { color: #7e8792; }
.bar { width: 2px; height: 13px; margin: 0 2px; background: #7ba2d0; }
.drop { position: relative; height: 22px; }
.open { height: 22px; width: 122px; display: flex; align-items: center; gap: 7px; padding: 0 1px; background: #ffe6a0; border: 1px solid #f58b43; border-bottom: 0; }
.open svg { margin-right: 1px; }
.open .tri { margin-left: auto; border-width: 3px; border-bottom: 0; }
.menu { position: absolute; left: 0; top: 21px; width: 165px; padding: 1px; background: linear-gradient(90deg, #dfeaf5, #e5ebf5 30px); border: 1px solid var(--line); z-index: 2; }
.menu button { display: block; width: 100%; height: 22px; text-align: left; padding-left: 31px; border: 1px solid transparent; }
.menu .hot { background: #ffe6a0; border-color: #f58b43; }
.dgrid { flex: 1; min-height: 0; padding: 0 1px; border-bottom: 2px solid var(--line); overflow: hidden; }
.dgrid .grid { height: 100%; }
.k1 { width: 181px; } .k3 { width: 182px; } .k4 { width: 103px; } .k5 { width: 93px; }
.dgrid .grid td { height: 21px; padding: 0 0 0 4px; }
.dgrid .grid th { height: 21px; padding: 0; }
.dgrid th div { display: flex; align-items: center; justify-content: center; position: relative; padding-right: 10px; }
.dgrid th .pin { position: absolute; right: 0; }
.dgrid td div { display: flex; align-items: center; }
.cond { width: 12px; height: 12px; background: #6a6ad2; border: 1px solid #26264f; box-shadow: inset 0 0 0 2px #fff; flex: none; }
.dgrid td span { height: 18px; line-height: 18px; margin-left: 3px; padding-left: 4px; border-left: 1px dotted #888; }
.dgrid .grid .rest td { height: auto; }
.dgrid .grid tfoot td { height: 18px; }
.dgrid tfoot td + td { background: #f0f0f0; }
.taskbar { height: 40px; flex: none; display: flex; align-items: center; color: #fff; font: 12px var(--ui); background: linear-gradient(90deg, #0d0908 0, #1b110c 22%, #110c0a 37%, #2a1503 45%, #2a1004 52%, #202425 54%, #242423 64%, #211a15 70%, #101113 78%, #1b1009 84%, #0c0a09 100%); }
.task { width: 49px; height: 40px; flex: none; display: grid; place-items: center; }
.task.start, .task.plain { width: 48px; }
.task.plain + .task:not(.plain) { margin-left: 2px; }
.task.on { background: linear-gradient(#6cc063, #6cc063) center bottom / 40px 2px no-repeat; }
.task.active { background: linear-gradient(#6cc063, #6cc063) center bottom / 48px 2px no-repeat, #534d4b; }
.taskbar > svg { margin-right: 8px; }
.taskbar > svg:nth-last-of-type(3) { margin-right: 6px; }
.taskbar > svg:nth-last-of-type(2) { margin-right: 10px; }
.taskbar time { text-align: center; line-height: 18px; margin: 0 17px 0 13px; }
.taskbar .peek { width: 1px; height: 40px; margin: 0 4px 0 12px; background: #66605c; }
</style>
